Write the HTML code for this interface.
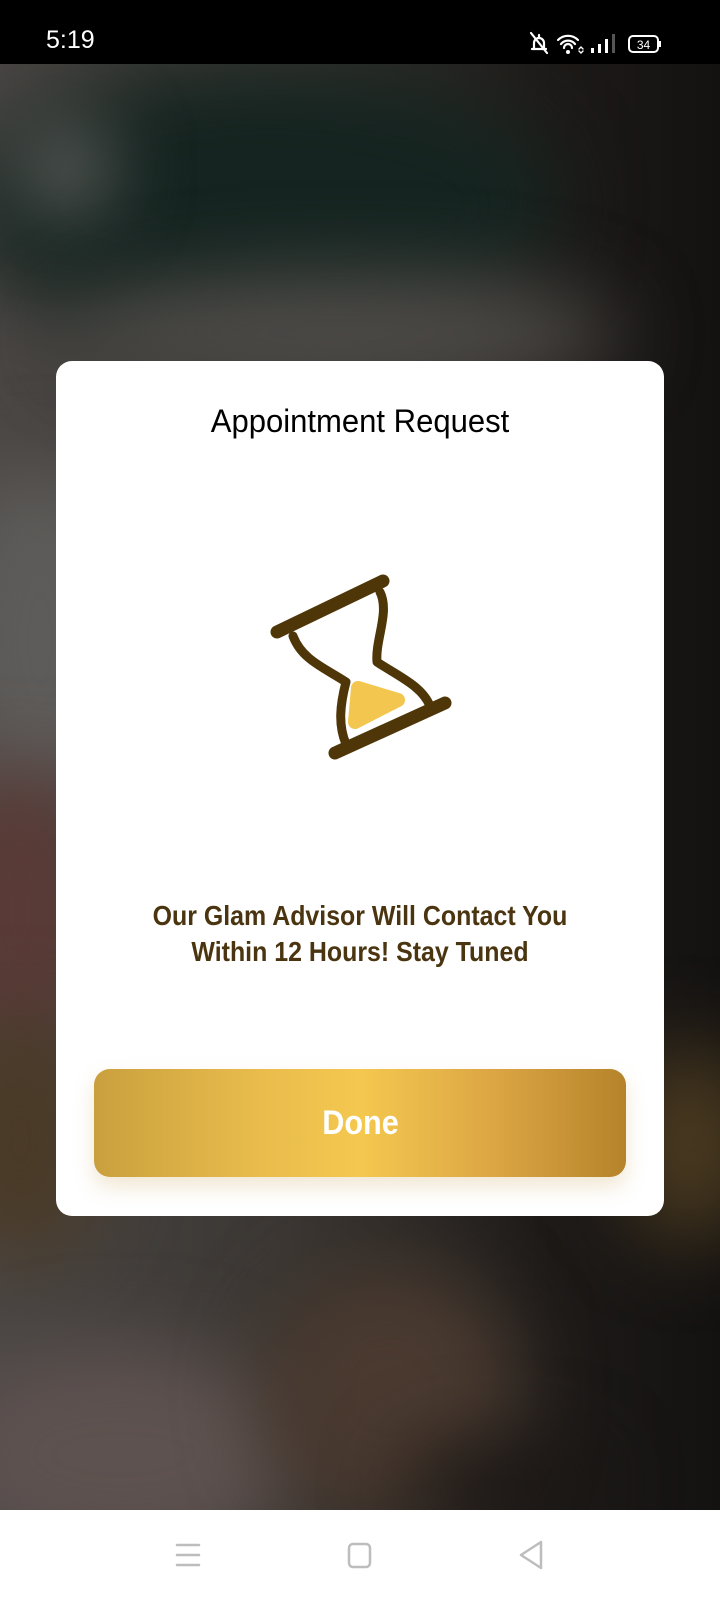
<!DOCTYPE html>
<html style="background:#fff"><head><meta charset="utf-8"><style>
*{margin:0;padding:0;box-sizing:border-box}
body{width:720px;height:1600px;overflow:hidden;position:relative;background:#2a2522;font-family:"Liberation Sans",sans-serif}
.bg{position:absolute;left:0;top:64px;width:720px;height:1446px;overflow:hidden;background:linear-gradient(90deg,#4a4644 0%,#3a3632 40%,#1e1b19 75%,#141211 100%)}
.b{position:absolute;border-radius:50%;filter:blur(40px)}
.status{position:absolute;left:0;top:0;width:720px;height:64px;background:#000;color:#fff}
.nav{position:absolute;left:0;top:1510px;width:720px;height:90px;background:#fff}
.card{position:absolute;left:56px;top:361px;width:608px;height:855px;background:#fff;border-radius:16px}
.title{position:absolute;left:0;width:608px;text-align:center;font-size:32px;color:#000;transform:scaleX(0.97)}
.msg{position:absolute;left:0;width:608px;text-align:center;font-size:28px;font-weight:bold;color:#4a3510;line-height:36px;transform:scaleX(0.89)}
.btn{position:absolute;left:38px;top:708px;width:532px;height:108px;border-radius:16px;background:linear-gradient(90deg,#c9a03e 0%,#e8bb4c 30%,#f4c84f 50%,#dca644 75%,#b5832a 100%);box-shadow:0 10px 20px rgba(200,160,80,0.25);color:#fff;font-weight:bold;font-size:34px;text-align:center;line-height:108px}
.btn span{display:inline-block;transform:scaleX(0.9)}
</style></head><body>
<div class="bg">
<div class="b" style="left:-40px;top:0;width:600px;height:280px;background:#152420"></div>
<div class="b" style="left:20px;top:60px;width:90px;height:90px;background:#6a6866"></div>
<div class="b" style="left:60px;top:210px;width:560px;height:120px;background:#4e4b48"></div>
<div class="b" style="left:-60px;top:400px;width:200px;height:350px;background:#5e5c5a"></div>
<div class="b" style="left:-60px;top:700px;width:160px;height:300px;background:#5a3a36"></div>
<div class="b" style="left:-60px;top:950px;width:160px;height:250px;background:#4a3a26"></div>
<div class="b" style="left:620px;top:980px;width:140px;height:200px;background:#4a3a20"></div>
<div class="b" style="left:-60px;top:1280px;width:360px;height:220px;background:#5e5250"></div>
<div class="b" style="left:260px;top:1200px;width:260px;height:260px;background:#4a3a30"></div>
<div class="b" style="left:400px;top:1380px;width:200px;height:80px;background:#1a1614"></div>
</div>
<div class="status">
<div style="position:absolute;left:46px;top:26px;font-size:25px">5:19</div>
<svg style="position:absolute;left:528px;top:30px" width="150" height="28" viewBox="0 0 150 28">
<g fill="none" stroke="#fff" stroke-width="2.2" stroke-linecap="round">
<path d="M4 19 h14 M6 19 v-6 a5 5 0 0 1 10 0 v6 M11 5 v3 M3 3 L19 23"/>
<path d="M30 10 a14 14 0 0 1 20 0 M33 14 a9 9 0 0 1 14 0 M36 18 a4 4 0 0 1 8 0"/>
<path d="M51 19 l2 -2 l2 2 M51 21 l2 2 l2 -2" stroke-width="1.4"/>
</g>
<circle cx="40" cy="22" r="2" fill="#fff"/>
<rect x="63" y="18" width="3" height="5" fill="#fff"/><rect x="70" y="14" width="3" height="9" fill="#fff"/><rect x="77" y="9" width="3" height="14" fill="#fff"/><rect x="84" y="4" width="3" height="19" fill="#555"/>
<rect x="101" y="6" width="29" height="16" rx="4" fill="none" stroke="#fff" stroke-width="2"/>
<rect x="131" y="11" width="2" height="6" fill="#fff"/>
<text x="115.5" y="19" font-size="12" fill="#fff" text-anchor="middle" font-family="Liberation Sans">34</text>
</svg>
</div>
<div class="card">
<div class="title" style="top:42px">Appointment Request</div>
<svg style="position:absolute;left:0;top:0" width="608" height="855" viewBox="56 361 608 855">
<path d="M358 688 L398 700 L355 722 Z" fill="#f2c64f" stroke="#f2c64f" stroke-width="14" stroke-linejoin="round"/>
<g fill="none" stroke="#4f3608" stroke-linecap="round" stroke-linejoin="round">
<path d="M277 632 L383 581" stroke-width="13"/>
<path d="M335 753 L445 703" stroke-width="13"/>
<path d="M293 636 C302 660 325 668 346 682 C340 705 338 725 346 744" stroke-width="9"/>
<path d="M380 592 C390 612 375 640 377 662 C398 676 422 686 430 706" stroke-width="9"/>
</g>
</svg>
<div class="msg" style="top:537px">Our Glam Advisor Will Contact You<br>Within 12 Hours! Stay Tuned</div>
<div class="btn"><span>Done</span></div>
</div>
<div class="nav">
<svg width="720" height="90" viewBox="0 0 720 90">
<g fill="none" stroke="#bdbdbd" stroke-width="2.5" stroke-linecap="round" stroke-linejoin="round">
<path d="M177 35 h22 M177 45 h22 M177 55 h22"/>
<rect x="349" y="34" width="21" height="23" rx="4"/>
<path d="M541 32 L541 58 L521 45 Z"/>
</g>
</svg>
</div>
</body></html>
